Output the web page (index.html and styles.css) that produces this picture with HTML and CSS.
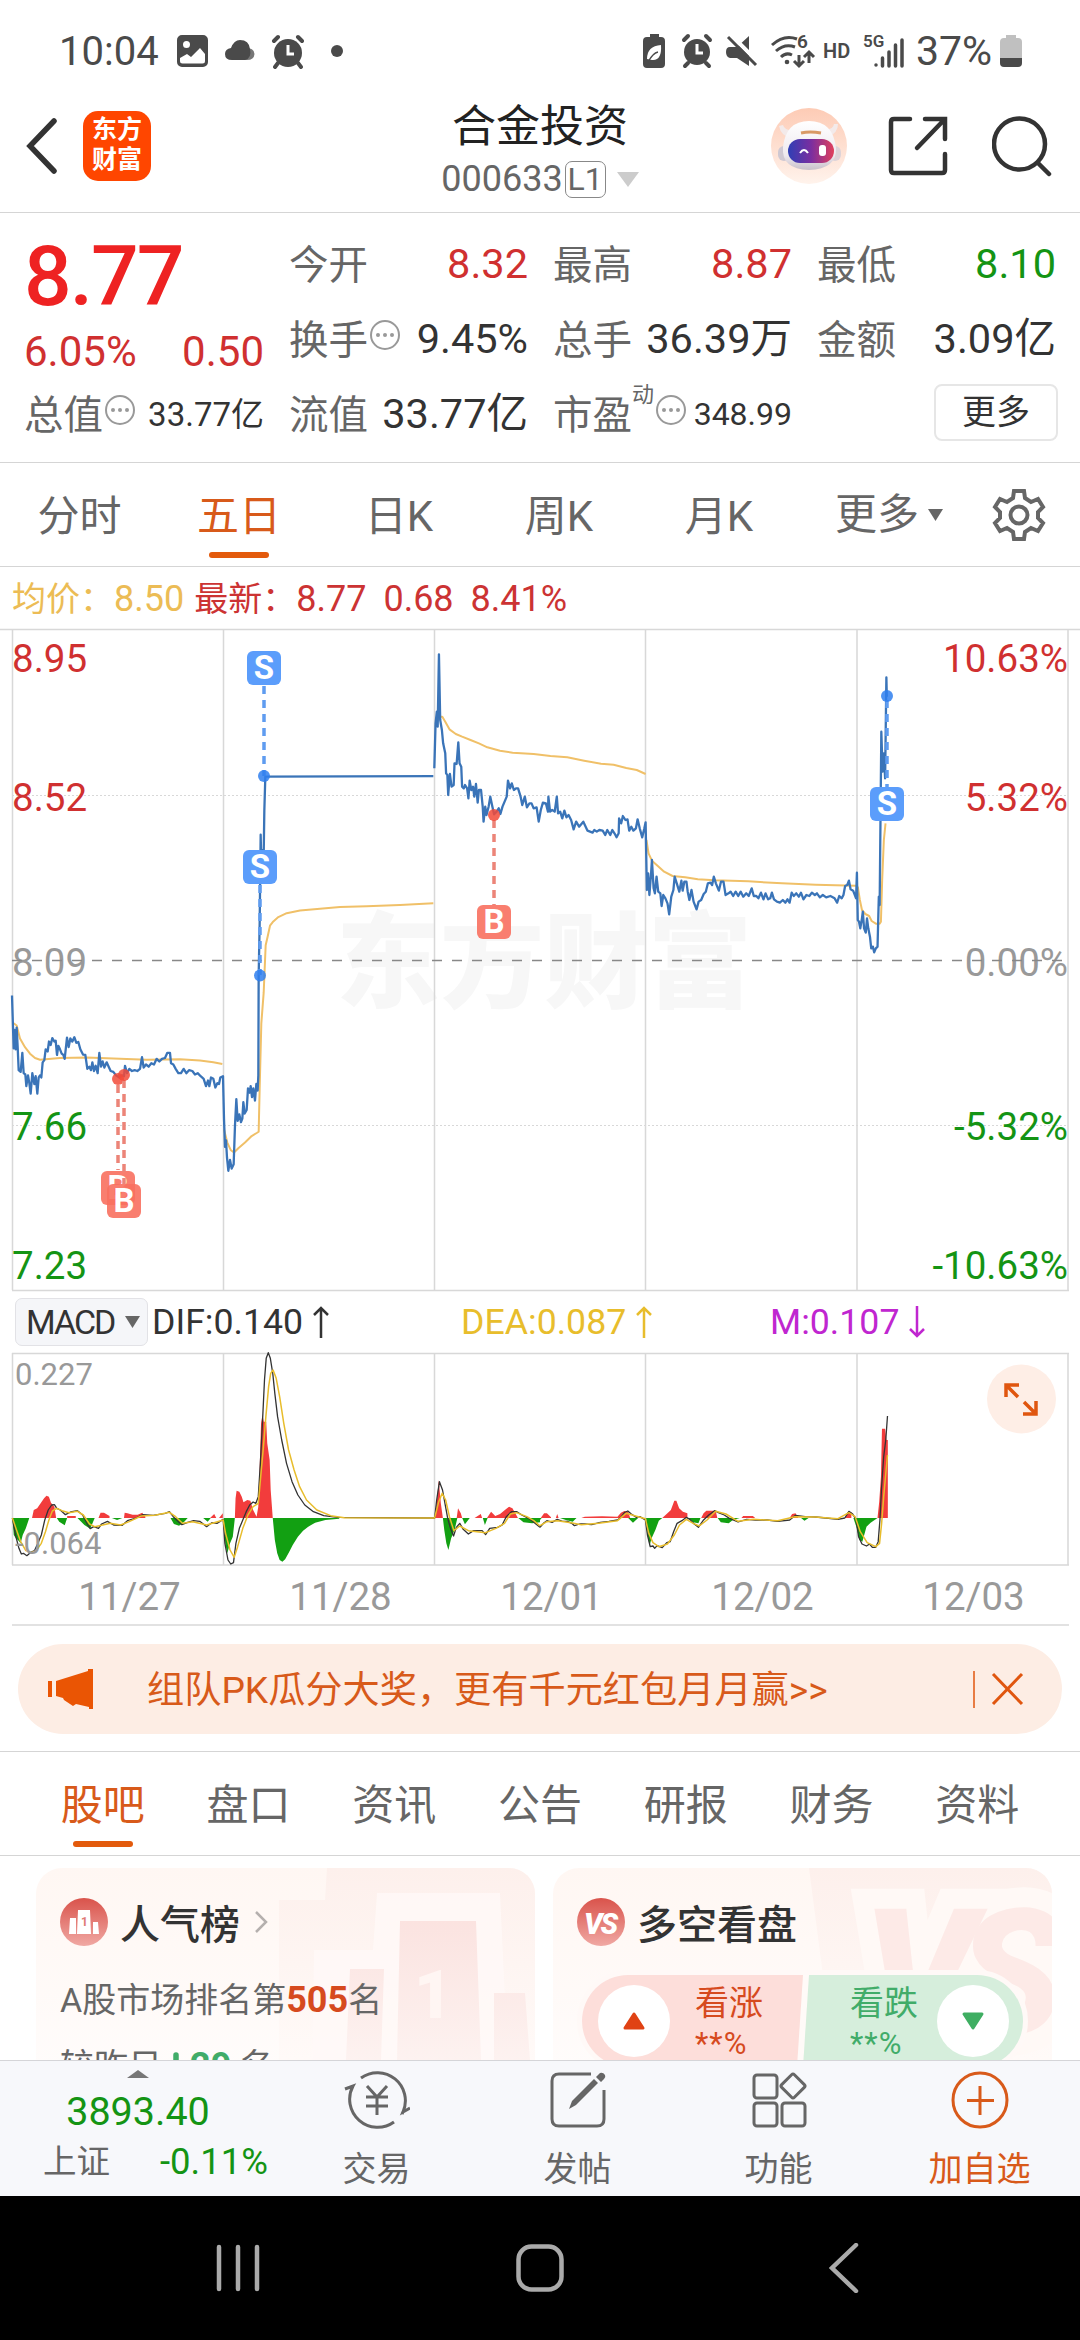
FILE: index.html
```html
<!DOCTYPE html>
<html lang="zh-CN">
<head>
  <meta charset="UTF-8">
  <meta name="viewport" content="width=device-width, initial-scale=1.0">
  <title>合金投资 000633</title>
  <link rel="stylesheet" href="styles.css">
</head>
<body>
  <div class="phone">

    <div class="statusbar">
      <span class="clock">10:04</span>
      <svg class="st-left" width="170" height="36" viewBox="0 0 170 36">
        <path fill="#4a4a4a" fill-rule="evenodd" d="M5 2h21a5 5 0 0 1 5 5v22a5 5 0 0 1-5 5H5a5 5 0 0 1-5-5V7a5 5 0 0 1 5-5zM9.500 8a3.500 3.500 0 1 0 0 7a3.500 3.500 0 0 0 0-7zM3 25v3q0 2.500 2.500 2.500h20q2.500 0 2.500-2.500v-7l-5-6l-9 9l-4-3z"/>
        <path fill="#777" d="M66 14q12 1 11.500 7q-.5 6-7.500 6h-8z"/>
        <path fill="#4a4a4a" d="M55 27q-7 0-7-6q0-5 6-6q3-8 9-8q9 0 10 9q2 9-5 11z"/>
        <circle cx="111" cy="20" r="14" fill="#4a4a4a"/>
        <path d="M111 12v9h6" fill="none" stroke="#fff" stroke-width="3"/>
        <path d="M97 8l4-4M125 8l-4-4M101 30l-3 4M121 30l3 4" stroke="#4a4a4a" stroke-width="4" stroke-linecap="round"/>
        <circle cx="160" cy="18" r="6" fill="#4a4a4a"/>
      </svg>
      <div class="st-right">
        <svg width="225" height="40" viewBox="0 0 225 40">
          <g fill="#4a4a4a">
            <path d="M9 3h9v3h2q4 0 4 4v23q0 4-4 4H6q-4 0-4-4V10q0-4 4-4h3z"/>
            <path d="M6 28q0-13 14-14q1 16-9 15zM4 30l5-2" fill="#fff"/>
            <circle cx="56" cy="21" r="13"/>
            <path d="M89 16h7l12-11v30L96 27h-7q-4-1-4-6t4-5z"/>
          </g>
          <path d="M7 31q5-9 10-10" fill="none" stroke="#4a4a4a" stroke-width="1.500"/>
          <path d="M56 13v9h6" fill="none" stroke="#fff" stroke-width="3"/>
          <path d="M43 9l4-4M69 9l-4-4M47 32l-3 3M65 32l3 3" stroke="#4a4a4a" stroke-width="4" stroke-linecap="round"/>
          <path d="M90 4l27 27" stroke="#fff" stroke-width="4"/>
          <path d="M87 6l28 28" stroke="#4a4a4a" stroke-width="3"/>
          <g fill="none" stroke="#4a4a4a" stroke-width="3">
            <path d="M131 14q12-11 25-6M135 20q9-8 19-4M140 26q5-5 11-2"/>
            <path d="M158 24v11m-5-5l5 5l5-5M168 32V21m-5 5l5-5l5 5"/>
          </g>
          <circle cx="146" cy="31" r="2.300" fill="#4a4a4a"/>
          <text x="156" y="17" class="st-six">6</text>
          <text x="182" y="27" class="st-hd">HD</text>
        </svg>
        <svg width="38" height="40" viewBox="0 0 38 40">
          <text x="-3" y="16" class="st-5g">5G</text>
          <path d="M10 34v0M16.500 35v-8M23 35V21M29.500 35V14M36 35V9" stroke="#4a4a4a" stroke-width="3.500" stroke-linecap="round"/>
        </svg>
        <span class="battery-num">37%</span>
        <svg width="22" height="36" viewBox="0 0 22 36">
          <path d="M6 2h10v3h2q4 0 4 4v17H0V9q0-4 4-4h2z" fill="#c0c0c0"/>
          <path d="M0 25h22v5q0 4-4 4H4q-4 0-4-4z" fill="#4a4a4a"/>
        </svg>
      </div>
    </div>

    <div class="header">
      <div class="header-left">
        <svg width="32" height="58" viewBox="0 0 32 58"><path d="M28 4L4 29l24 25" fill="none" stroke="#333" stroke-width="5.500" stroke-linecap="round"/></svg>
        <div class="logo">东方<br>财富</div>
      </div>
      <div class="title">
        <h1>合金投资</h1>
        <div class="code">000633<span class="level">L1</span><svg width="22" height="15" viewBox="0 0 22 15"><path d="M0 0h22L11 15z" fill="#ccc"/></svg></div>
      </div>
      <div class="header-right">
        <svg width="76" height="76" viewBox="0 0 76 76">
          <defs>
            <linearGradient id="peach" x1="0" y1="0" x2="0" y2="1"><stop offset="0" stop-color="#fdcbb5"/><stop offset="1" stop-color="#fff3ec"/></linearGradient>
            <linearGradient id="visor"><stop offset="0" stop-color="#2f3fb5"/><stop offset=".5" stop-color="#7a2ea0"/><stop offset="1" stop-color="#e0405c"/></linearGradient>
            <linearGradient id="helmet" x1="0" y1="0" x2="0" y2="1"><stop offset="0" stop-color="#fff"/><stop offset=".7" stop-color="#eee9ee"/><stop offset="1" stop-color="#c9c0ca"/></linearGradient>
          </defs>
          <circle cx="38" cy="38" r="38" fill="url(#peach)"/>
          <path d="M8 18q2 10 12 12l6-8q-12 2-14-5zM67 16q0 9-10 13l-6-8q11 2 12-5z" fill="#f3eaea"/>
          <rect x="7" y="38" width="12" height="15" rx="6" fill="#cfc8d2"/>
          <rect x="58" y="38" width="12" height="15" rx="6" fill="#ddd3d8"/>
          <path d="M38 13q24 0 27 27q1 21-27 22q-28-1-26-23q3-26 26-26z" fill="url(#helmet)"/>
          <rect x="17" y="31" width="46" height="24" rx="12" fill="url(#visor)"/>
          <path d="M30 25q9-2 20 0" fill="none" stroke="#d99a66" stroke-width="3"/>
          <path d="M29 45q4-6 8 0" fill="none" stroke="#fff" stroke-width="2"/>
          <rect x="48" y="37" width="7" height="11" rx="3" fill="#fff"/>
        </svg>
        <svg width="60" height="60" viewBox="0 0 60 60"><path d="M22 3H6Q3 3 3 6v48q0 3 3 3h48q3 0 3-3V38M37 3h20v20M56 4L29 32" fill="none" stroke="#333" stroke-width="4.500" stroke-linecap="round"/></svg>
        <svg width="60" height="62" viewBox="0 0 60 62"><circle cx="27.500" cy="29" r="25.500" fill="none" stroke="#333" stroke-width="4.500"/><path d="M46 48l11 11" stroke="#333" stroke-width="4.500" stroke-linecap="round"/></svg>
      </div>
    </div>

    <div class="quote">
      <div class="quote-main">
        <div class="price">8.77</div>
        <div class="change"><span>6.05%</span><span>0.50</span></div>
        <div class="cell small"><label>总值</label><i class="more-dot"></i><b>33.77亿</b></div>
      </div>
      <div class="quote-grid">
        <div class="cell"><label>今开</label><b class="up">8.32</b></div>
        <div class="cell"><label>最高</label><b class="up">8.87</b></div>
        <div class="cell"><label>最低</label><b class="down">8.10</b></div>
        <div class="cell"><label>换手</label><i class="more-dot"></i><b>9.45%</b></div>
        <div class="cell"><label>总手</label><b>36.39万</b></div>
        <div class="cell"><label>金额</label><b>3.09亿</b></div>
        <div class="cell"><label>流值</label><b>33.77亿</b></div>
        <div class="cell small pe"><label>市盈</label><sup>动</sup><i class="more-dot"></i><b>348.99</b></div>
        <div class="cell"><button class="btn-more">更多</button></div>
      </div>
    </div>

    <div class="period-tabs">
      <span>分时</span>
      <span class="active">五日</span>
      <span>日K</span>
      <span>周K</span>
      <span>月K</span>
      <span class="wide">更多<svg width="15" height="12" viewBox="0 0 15 12"><path d="M0 0h15L7.500 12z" fill="#666"/></svg></span>
      <svg class="gear" width="54" height="54" viewBox="0 0 54 54"><g fill="none" stroke="#666" stroke-width="4"><path stroke-linejoin="miter" d="M22 3h10l1 7l6 4l7-3l5 8l-5 5v6l5 5l-5 8l-7-3l-6 4l-1 7H22l-1-7l-6-4l-7 3l-5-8l5-5v-6l-5-5l5-8l7 3l6-4z"/><circle cx="27" cy="27" r="8.500"/></g></svg>
    </div>

    <div class="avg-row">
      <span class="avg">均价：<em>8.50</em></span>
      <span class="last">最新：<em>8.77</em><em>0.68</em><em>8.41%</em></span>
    </div>

    <svg class="price-chart" width="1080" height="663" viewBox="0 629 1080 663">
      <g class="watermark"><text x="336" y="1000" textLength="416">东方财富</text></g>
      <g class="grid">
        <path d="M0 629.500H1080M12 1290.500H1069"/>
        <path d="M12.500 629V1290M223.500 629V1290M434.500 629V1290M645.500 629V1290M857 629V1290M1068 629V1290"/>
        <path class="dotted" d="M12 795.500H1068M12 1125.500H1068"/>
      </g>
      <g class="axis">
        <text class="up" x="12" y="672">8.95</text>
        <text class="up" x="12" y="811">8.52</text>
        <text class="flat" x="12" y="976">8.09</text>
        <text class="down" x="12" y="1140">7.66</text>
        <text class="down" x="12" y="1279">7.23</text>
        <text class="up end" x="1068" y="672">10.63%</text>
        <text class="up end" x="1068" y="811">5.32%</text>
        <text class="flat end" x="1068" y="976">0.00%</text>
        <text class="down end" x="1068" y="1140">-5.32%</text>
        <text class="down end" x="1068" y="1279">-10.63%</text>
      </g>
      <path class="zero" d="M12 960.500H1068"/>

      <!-- 11/27, 11/28 -->
      <g transform="translate(0 620) scale(.33333 .43366)">
        <g class="avg-line">
          <polyline points="41,930 50,935 60,965 75,985 90,1000 105,1010 120,1014 180,1010 260,1009 340,1011 440,1014 540,1013 600,1016 640,1020 667,1024"/>
          <polyline points="672,1175 682,1205 692,1222 702,1228 715,1218 735,1205 755,1190 770,1183 776,1180 779,1080 784,930 791,860 797,750 803,730 810,705 820,695 835,685 860,676 900,670 960,666 1020,662 1100,660 1200,657 1300,653"/>
        </g>
        <polyline class="price-line" points="36,866 38,915 41,988 44,945 47,990 50,940 53,985 56,1038 62,1042 67,998 71,1045 76,1048 79,1075 84,1050 88,1068 92,1092 97,1045 103,1070 107,1052 112,1092 116,1055 120,1050 124,1055 128,1020 133,1015 137,990 143,995 147,972 152,980 157,964 163,972 167,970 171,1003 175,982 180,990 185,1000 190,1003 194,1012 201,963 206,985 211,965 217,972 223,962 229,975 235,973 241,990 249,1002 256,1003 262,1035 268,1030 273,1038 277,1020 282,1040 287,1028 293,1045 298,998 303,1030 308,1018 313,1032 320,1020 326,1030 332,1040 340,1042 348,1050 358,1055 366,1050 372,1052 375,1028 381,1045 388,1035 396,1040 404,1038 412,1040 420,1035 426,1008 431,1032 438,1025 446,1030 454,1022 462,1025 470,1012 478,1018 486,1012 495,1010 502,998 510,998 513,1022 520,1025 527,1035 535,1045 543,1045 551,1035 559,1045 567,1038 577,1040 585,1048 593,1045 602,1052 611,1058 618,1075 624,1062 628,1075 633,1055 640,1058 646,1078 652,1068 657,1070 661,1055 669,1052 672,1150 675,1215 678,1200 681,1240 685,1270 690,1245 695,1265 701,1255 705,1165 709,1105 713,1155 718,1140 723,1158 727,1150 730,1112 734,1138 740,1130 744,1080 749,1090 752,1075 756,1100 760,1080 765,1108 769,1070 773,1085 775,1050 776,820 779,700 782,495 785,600 788,530 791,545 793,440 796,361 1300,360"/>
      </g>

      <!-- 12/01 - 12/03 -->
      <g transform="translate(420 620) scale(.42092 .33333)">
        <g class="avg-line">
          <polyline points="37,320 45,290 53,290 60,305 70,328 85,342 100,350 120,360 140,370 160,382 190,392 220,398 270,402 310,408 350,412 390,422 430,431 460,434 490,444 515,450 536,462"/>
          <polyline points="538,660 543,700 551,722 565,738 580,755 600,768 630,772 660,778 700,781 780,784 860,790 940,794 1036,797"/>
          <polyline points="1040,800 1045,840 1050,870 1058,882 1067,888 1073,903 1083,911 1092,911 1095,905 1098,780 1102,660 1106,610"/>
        </g>
        <polyline class="price-line" points="34,445 37,310 40,275 42,320 45,103 48,300 52,330 55,370 60,400 62,460 65,465 67,525 71,462 75,500 80,495 82,430 87,432 91,367 94,430 98,440 100,500 104,505 107,495 112,505 115,535 118,482 122,510 126,500 129,530 133,492 137,548 140,510 145,510 149,560 151,605 155,560 158,585 163,560 167,530 172,560 176,583 182,575 187,565 191,582 196,560 201,545 206,530 209,482 214,505 218,490 223,510 228,505 233,505 239,530 243,555 249,530 254,562 260,550 265,550 270,565 277,562 282,605 287,570 292,548 299,550 304,575 305,530 309,575 314,570 320,575 325,530 328,580 333,575 338,595 343,572 348,592 353,585 359,600 365,628 371,605 378,620 388,605 398,632 410,638 414,630 420,635 426,630 434,632 440,645 445,630 452,645 457,630 462,640 467,652 472,640 473,595 478,610 482,588 488,600 493,598 497,632 502,620 507,632 513,625 517,598 522,625 528,652 533,625 536,607 539,810 542,760 545,825 549,760 551,720 555,805 558,820 562,770 566,815 571,820 574,858 578,825 583,835 588,850 592,883 597,830 602,810 605,770 610,790 616,815 621,782 624,812 628,785 633,785 636,815 640,840 645,810 650,845 657,868 662,845 668,840 674,822 679,815 684,790 690,788 694,795 698,770 703,790 710,812 715,785 721,785 726,825 733,820 738,815 744,828 750,815 756,828 762,815 768,830 775,820 781,828 788,805 793,828 799,828 804,835 810,818 816,838 821,820 827,838 832,835 836,818 841,838 848,845 855,848 862,840 868,848 873,838 878,848 883,818 888,828 894,820 900,830 905,818 911,838 918,825 925,828 931,818 938,825 943,820 950,832 957,825 965,832 975,828 985,835 991,848 996,828 1002,835 1006,825 1010,798 1015,795 1019,782 1023,808 1029,812 1036,835 1038,758 1040,900 1043,905 1046,925 1050,895 1052,875 1055,925 1059,938 1062,895 1065,925 1069,950 1072,985 1076,980 1079,997 1083,985 1087,980 1090,830 1092,855 1094,600 1096,335 1099,455 1102,400 1105,475 1108,172 1109,230"/>
      </g>

      <!-- trade marks -->
      <g class="mark sell">
        <path d="M264 686V776"/><circle cx="264" cy="776" r="6"/>
        <rect x="247" y="651" width="34" height="34" rx="6"/><text x="264" y="679">S</text>
      </g>
      <g class="mark sell">
        <path d="M260 885V975"/><circle cx="260" cy="975.500" r="6"/>
        <rect x="243" y="850" width="34" height="34" rx="6"/><text x="260" y="878">S</text>
      </g>
      <g class="mark buy">
        <path d="M118 1085V1170"/><circle cx="118" cy="1079" r="6"/>
        <rect x="101" y="1171" width="34" height="34" rx="6"/><text x="118" y="1199">B</text>
      </g>
      <g class="mark buy">
        <path d="M124 1080V1184"/><circle cx="124" cy="1075" r="6"/>
        <rect x="107" y="1184" width="34" height="34" rx="6"/><text x="124" y="1212">B</text>
      </g>
      <g class="mark buy">
        <path d="M494 820V905"/><circle cx="494" cy="815" r="6"/>
        <rect x="477" y="905" width="34" height="34" rx="6"/><text x="494" y="933">B</text>
      </g>
      <g class="mark sell">
        <path d="M887 700V788"/><circle cx="887" cy="696" r="6"/>
        <rect x="870" y="787" width="34" height="34" rx="6"/><text x="887" y="815">S</text>
      </g>
    </svg>

    <div class="macd-row">
      <span class="macd-btn">MACD<svg width="15" height="12" viewBox="0 0 15 12"><path d="M0 0h15L7.500 12z" fill="#666"/></svg></span>
      <span class="dif">DIF:0.140<svg width="16" height="32" viewBox="0 0 16 32"><path d="M8 32V2M1 9l7-7l7 7"/></svg></span>
      <span class="dea">DEA:0.087<svg width="16" height="32" viewBox="0 0 16 32"><path d="M8 32V2M1 9l7-7l7 7"/></svg></span>
      <span class="m">M:0.107<svg width="16" height="32" viewBox="0 0 16 32"><path d="M8 0v30M1 23l7 7l7-7"/></svg></span>
    </div>

    <svg class="macd-chart" width="1080" height="214" viewBox="0 1352 1080 214">
      <g class="grid">
        <path d="M12 1353.500H1069M12 1565H1069"/>
        <path d="M12.500 1353V1565M223.500 1353V1565M434.500 1353V1565M645.500 1353V1565M857 1353V1565M1068 1353V1565"/>
      </g>
      <g transform="translate(0 1290) scale(.34439 .33333)">
        <path class="bar-up" d="M93 684L98 660L108 655L118 640L128 625L135 617L142 620L148 638L158 650L163 684zM195 684V678H220V684zM286 684L292 668H302L318 678V684zM360 684L362 668L370 670L385 674H400L413 668L422 680V684zM610 684L622 672L628 684zM636 684L647 670V684zM682 684L684 625L687 602L695 605L702 620L707 637L718 630L727 632L735 660L745 680L750 650L753 560L756 470L758 400L762 375L766 395H773L776 460L783 510L786 600L792 684zM1262 684L1268 640L1274 570L1280 640L1286 684zM1326 684L1330 655L1338 670L1342 684zM1378 684L1396 672L1400 684zM1414 684L1426 665L1438 678L1452 672L1466 660L1478 650L1488 655L1504 684z"/>
        <path class="bar-down" d="M36 684L40 735L46 745L52 750L60 760L66 735L75 715L85 684zM165 684L172 695L188 706L195 684zM225 684L245 705L262 716L275 684zM325 684L340 690L355 684zM495 684L505 702L520 707L535 695L545 684zM590 684L603 695L612 684zM650 684L654 760L660 790L668 760L676 740L682 684zM792 684L798 750L805 790L812 810L820 815L828 808L840 785L850 765L865 740L880 722L895 710L915 698L945 690L985 686V684zM1286 684L1290 720L1296 760L1302 780L1310 745L1320 720L1328 684zM1342 684L1350 703L1364 684zM1402 684L1408 705L1416 684zM1505 684L1520 697L1545 700L1568 697V684z"/>
        <polyline class="dif-line" points="36,684 45,735 55,775 62,792 68,790 78,797 88,788 100,782 110,760 120,735 130,690 140,660 150,645 158,644 165,655 175,660 190,674 205,666 225,662 240,675 252,700 262,716 272,710 286,715 295,702 312,694 330,705 355,706 370,692 395,684 415,674 445,676 480,670 492,665 503,680 515,692 528,704 545,697 562,692 580,694 600,710 615,698 630,700 648,688 653,760 662,810 670,822 678,818 685,760 695,715 705,690 715,665 725,645 735,636 743,640 750,620 756,520 762,400 768,270 773,205 779,188 785,205 792,250 798,310 806,380 818,450 832,520 848,575 865,615 885,645 910,665 940,677 980,682 1262,684 1268,630 1276,575 1285,600 1292,640 1300,685 1308,715 1317,738 1325,712 1335,700 1345,718 1360,732 1375,722 1400,722 1410,734 1422,715 1445,712 1458,705 1470,680 1485,665 1500,665 1515,675 1535,685 1550,697 1568,712"/>
        <polyline class="dea-line" points="36,684 48,720 60,755 75,782 90,788 105,782 120,760 132,725 142,690 152,663 165,655 180,662 200,668 225,664 242,675 260,702 275,710 295,706 320,700 350,705 375,695 410,678 450,676 492,667 510,680 530,700 560,695 600,705 648,690 655,730 668,780 680,802 690,770 705,715 720,675 735,650 750,640 757,560 765,470 772,380 780,290 786,250 793,240 802,265 812,320 824,400 838,480 854,540 870,590 890,630 920,660 960,677 1000,683 1262,684 1274,635 1284,610 1294,630 1305,680 1318,722 1335,708 1360,722 1410,728 1440,715 1465,700 1482,672 1500,668 1530,680 1550,692 1568,708"/>
      </g>
      <g transform="translate(540 1290) scale(.34439 .33333)">
        <path class="bar-up" d="M2 684L12 670H20L32 682V684zM46 684L50 672L54 684zM120 684L130 680L180 679L225 680L235 668L245 663L256 666L262 684zM355 684L370 670L380 660L390 632L396 632L404 655L415 665L428 670V684zM468 684L475 670L483 662H510L515 684zM585 684L590 678H618L625 684zM725 684L732 672L742 670L750 684zM885 684L892 668L904 666V684zM980 684L985 635L990 560L993 416H1002L1006 450H1010V684z"/>
        <path class="bar-down" d="M0 684V690L5 684zM58 684L75 690L95 695L106 684zM256 684L270 698L285 684zM308 684L312 730L318 768L324 745L335 720L345 692L355 684zM430 684L445 697L460 700L466 684zM516 684L525 697L548 700L560 690L580 684zM758 684L768 692L780 684zM910 684L920 715L928 750L936 755L948 710L960 698L980 684z"/>
        <polyline class="dif-line" points="0,712 10,700 20,692 35,697 50,688 65,694 80,694 92,700 100,707 115,702 130,702 150,704 175,697 200,694 225,690 235,682 245,668 255,663 265,672 280,682 290,680 306,690 312,735 320,770 328,768 333,775 340,767 355,773 368,758 378,755 388,725 398,700 412,692 425,682 435,688 448,702 460,712 475,690 490,675 507,662 518,668 535,675 550,685 575,696 600,688 625,690 660,690 690,694 725,690 742,676 770,680 800,681 830,684 865,688 885,684 897,664 908,672 918,690 925,740 935,762 948,768 957,762 965,772 975,772 982,755 987,690 992,590 998,500 1004,450 1009,378"/>
        <polyline class="dea-line" points="0,707 20,695 50,692 90,698 120,704 170,700 225,692 250,670 270,676 306,686 316,730 328,758 345,770 370,762 390,735 405,705 425,688 445,700 462,708 485,690 510,664 540,672 575,694 620,688 690,692 740,680 800,681 865,686 897,668 915,680 930,725 950,758 975,770 986,760 992,700 998,620 1005,540 1009,495"/>
      </g>
      <g class="axis">
        <text class="flat" x="15" y="1385">0.227</text>
        <text class="flat" x="15" y="1554">-0.064</text>
      </g>
      <circle cx="1021.500" cy="1399" r="34.500" fill="#feeee6"/>
      <path d="M1006 1397V1385H1019M1007 1386L1018 1397M1023 1414H1036V1401M1035 1413L1024 1402" fill="none" stroke="#e0560f" stroke-width="3.500"/>
    </svg>

    <div class="dates"><span>11/27</span><span>11/28</span><span>12/01</span><span>12/02</span><span>12/03</span></div>

    <div class="banner">
      <svg width="46" height="42" viewBox="0 0 46 42"><path d="M0 13h4v16H0zM8 13L40 3V1h5v40h-4v-2L28 36l-3 2l-9-6l-1-2l-7-2z" fill="#ea5504"/></svg>
      <p>组队PK瓜分大奖，更有千元红包月月赢&gt;&gt;</p>
      <svg class="close" width="52" height="38" viewBox="0 0 52 38"><path d="M1 1v37" stroke="#e0560f" stroke-width="1.500"/><path d="M20 4l29 30M49 4L20 34" stroke="#e0560f" stroke-width="3"/></svg>
    </div>

    <div class="info-tabs">
      <span class="active">股吧</span><span>盘口</span><span>资讯</span><span>公告</span><span>研报</span><span>财务</span><span>资料</span>
    </div>

    <div class="cards">
      <div class="card rank">
        <svg class="card-bg" width="499" height="192" viewBox="0 0 499 192">
          <defs><linearGradient id="fade" x1="0" y1="0" x2="0" y2="1"><stop offset="0" stop-color="#fdf0ec"/><stop offset="1" stop-color="#fffaf8"/></linearGradient>
          <linearGradient id="fade2" x1="0" y1="0" x2="0" y2="1"><stop offset="0" stop-color="#fbe3e0"/><stop offset="1" stop-color="#fdf2f0"/></linearGradient></defs>
          <path d="M243 192V32h46l2-32h208v192z" fill="url(#fade)"/>
          <path d="M276 192l2-110h59l4-57h123l8 167z" fill="#fff9f7" opacity=".8"/>
          <path d="M310 192l4-91h34l-3 91zM361 192l3-139h76l5 139zM458 192v-67h31l5 67z" fill="url(#fade2)"/>
          <text x="378" y="150" class="bg-one">1</text>
        </svg>
        <div class="card-title">
          <svg width="48" height="48" viewBox="0 0 48 48">
            <defs><linearGradient id="badge" x1="0" y1="0" x2="0" y2="1"><stop offset="0" stop-color="#d9534b"/><stop offset="1" stop-color="#f0a8a3"/></linearGradient></defs>
            <circle cx="24" cy="24" r="24" fill="url(#badge)"/>
            <path d="M9 36l1-16h6v16zM17 36l1-24h12l1 24zM33 36V24h5l1 12z" fill="#fff"/>
            <text x="21" y="28" class="badge-one">1</text>
          </svg>
          <h2>人气榜</h2>
          <svg class="chev" width="14" height="24" viewBox="0 0 14 24"><path d="M2 2l10 10L2 22" fill="none" stroke="#b5b0ae" stroke-width="2.500"/></svg>
        </div>
        <p class="rank-line">A股市场排名第<b>505</b>名</p>
        <p class="rank-line second">较昨日<svg width="26" height="26" viewBox="0 0 26 26"><path d="M12 3v20M4 15l8 8l8-8" fill="none" stroke="#41ac69" stroke-width="5.500" stroke-linecap="round"/></svg><b>29</b> 名</p>
      </div>

      <div class="card versus">
        <svg class="card-bg" width="499" height="192" viewBox="0 0 499 192">
          <path d="M256 0h243v192H281z" fill="url(#fade)"/>
          <text x="310" y="166" class="bg-vs outline">VS</text>
          <text x="310" y="166" class="bg-vs">VS</text>
        </svg>
        <div class="card-title">
          <svg width="48" height="48" viewBox="0 0 48 48"><circle cx="24" cy="24" r="24" fill="url(#badge)"/><text x="23" y="36" class="badge-vs">VS</text></svg>
          <h2>多空看盘</h2>
        </div>
        <div class="vote">
          <div class="bull">
            <i class="round"><svg width="24" height="20" viewBox="0 0 24 20"><path d="M12 3l9 14H3z" fill="#e04214" stroke="#e04214" stroke-width="3" stroke-linejoin="round"/></svg></i>
            <span>看涨<br><small>**%</small></span>
          </div>
          <div class="bear">
            <span>看跌<br><small>**%</small></span>
            <i class="round"><svg width="24" height="20" viewBox="0 0 24 20"><path d="M12 17l9-14H3z" fill="#3fae62" stroke="#3fae62" stroke-width="3" stroke-linejoin="round"/></svg></i>
          </div>
        </div>
      </div>
    </div>

    <div class="toolbar">
      <div class="index">
        <svg width="22" height="8" viewBox="0 0 22 8"><path d="M0 8L11 0l11 8z" fill="#777"/></svg>
        <strong>3893.40</strong>
        <div><span>上证</span><em>-0.11%</em></div>
      </div>
      <div class="tool">
        <svg width="66" height="60" viewBox="0 0 66 60"><g fill="none" stroke="#666" stroke-width="3"><path d="M17 8A28 28 0 0 1 59 42l7-4M50 52A28 28 0 0 1 9 16l-8 3M59 42l-1 2M9 16l1 0"/><path d="M23 16l10 11l10-11M22 27h22M22 36h22M33 27v18"/></g></svg>
        交易
      </div>
      <div class="tool">
        <svg width="60" height="60" viewBox="0 0 60 60"><path d="M43 4H11Q4 4 4 11v38q0 7 7 7h38q7 0 7-7V20" fill="none" stroke="#666" stroke-width="3"/><path d="M21 39l3-8L46 9l4 4L28 35zM48 7l4-4q3-1 5 2q1 2-1 4l-3 3z" fill="#666"/></svg>
        发帖
      </div>
      <div class="tool">
        <svg width="60" height="60" viewBox="0 0 60 60"><g fill="none" stroke="#666" stroke-width="3"><rect x="5" y="5" width="23" height="23" rx="3"/><rect x="5" y="33" width="23" height="23" rx="3"/><rect x="33" y="33" width="23" height="23" rx="3"/><rect x="35" y="7" width="18" height="18" rx="2" transform="rotate(45 44 16)"/></g></svg>
        功能
      </div>
      <div class="tool add">
        <svg width="60" height="60" viewBox="0 0 60 60"><g fill="none" stroke="#d85a1a" stroke-width="3"><circle cx="30" cy="30" r="27"/><path d="M30 16v29M17 30.500h27"/></g></svg>
        加自选
      </div>
    </div>

    <div class="navbar">
      <svg width="44" height="48" viewBox="0 0 44 48"><path d="M3 3v42M22 3v42M41 3v42" stroke="#aaa" stroke-width="4.500" stroke-linecap="round"/></svg>
      <svg class="home" width="48" height="48" viewBox="0 0 48 48"><rect x="2.500" y="2.500" width="43" height="43" rx="13" fill="none" stroke="#aaa" stroke-width="4.500"/></svg>
      <svg class="back" width="30" height="50" viewBox="0 0 30 50"><path d="M27 2L3 25l24 23" fill="none" stroke="#aaa" stroke-width="4.500" stroke-linecap="round"/></svg>
    </div>
  </div>
</body>
</html>
```

FILE: styles.css
```css
* {
  box-sizing: border-box;
}

body {
  margin: 0;
  background: #fff;
  color: #333;
  font-family: Roboto, "Noto Sans CJK SC", sans-serif;
}

h1, h2, p {
  margin: 0;
  font-weight: 400;
}

em, i {
  font-style: normal;
}

svg {
  display: block;
  flex: none;
}

.phone {
  width: 1080px;
  height: 2340px;
  overflow: hidden;
  display: flex;
  flex-direction: column;
}

.phone > * {
  flex: none;
}

.up { color: #d03030; fill: #d03030; }
.down { color: #149414; fill: #149414; }
.flat { fill: #999; }

/* status bar */
.statusbar {
  height: 92px;
  padding: 10px 58px 0 59px;
  display: flex;
  align-items: center;
  color: #4a4a4a;
}

.clock {
  width: 118px;
  font-size: 40px;
}

.st-right {
  margin-left: auto;
  display: flex;
  align-items: center;
}

.battery-num {
  font-size: 41px;
  margin: 0 8px 0 12px;
}

.st-six, .st-hd, .st-5g {
  fill: #4a4a4a;
  font-weight: 600;
}

.st-six { font-size: 19px; }
.st-hd { font-size: 20px; }
.st-5g { font-size: 17px; }

.price-chart, .st-right svg {
  overflow: visible;
}

/* header */
.header {
  height: 121px;
  border-bottom: 1px solid #d5d5d5;
  display: grid;
  grid-template-columns: 1fr auto 1fr;
  align-items: center;
}

.header-left {
  display: flex;
  align-items: center;
  gap: 25px;
  padding-left: 26px;
  padding-bottom: 13px;
}

.logo {
  width: 68px;
  height: 70px;
  border-radius: 15px;
  background: #ff4600;
  color: #fff;
  font-size: 25px;
  line-height: 30px;
  font-weight: 700;
  text-align: center;
  padding-top: 4px;
}

.title {
  text-align: center;
  padding-bottom: 1px;
}

.title h1 {
  font-size: 44px;
  line-height: 54px;
  color: #222;
}

.code {
  display: flex;
  align-items: center;
  justify-content: center;
  height: 50px;
  padding-top: 1px;
  font-size: 36px;
  color: #666;
}

.level {
  height: 37px;
  line-height: 34px;
  width: 41px;
  font-size: 32px;
  margin: 0 11px 0 2px;
  border: 1.500px solid #888;
  border-radius: 7px;
}

.header-right {
  display: flex;
  align-items: center;
  justify-content: flex-end;
  gap: 41px;
  padding-right: 28px;
  padding-bottom: 12px;
}

.header-right svg:nth-child(3) {
  margin-left: 3px;
}

/* quote panel */
.quote {
  height: 250px;
  border-bottom: 1px solid #d5d5d5;
  padding: 14px 24px 0 24px;
  display: flex;
  gap: 25px;
}

.quote-main {
  width: 240px;
}

.price {
  height: 93px;
  line-height: 99px;
  font-size: 84px;
  font-weight: 500;
  letter-spacing: -2px;
  color: #ee2222;
}

.change {
  height: 57px;
  line-height: 63px;
  display: flex;
  justify-content: space-between;
  font-size: 42px;
  color: #d03030;
}

.quote-grid {
  flex: 1;
  display: grid;
  grid-template-columns: repeat(3, 239px);
  grid-auto-rows: 75px;
  column-gap: 25px;
}

.cell {
  height: 75px;
  display: flex;
  align-items: center;
}

.cell label {
  font-size: 39.500px;
  color: #666;
  margin-top: -7px;
}

.cell b {
  margin-left: auto;
  font-weight: 400;
  font-size: 41.500px;
  line-height: 48px;
  white-space: nowrap;
}

.cell.small b {
  font-size: 33px;
}

.quote-grid .cell b {
  margin-top: -1px;
}

.cell.pe b {
  font-size: 32px;
}

.cell sup {
  font-size: 22px;
  line-height: 22px;
  color: #666;
  align-self: flex-start;
  margin-top: 7px;
}

.more-dot {
  width: 30px;
  height: 30px;
  flex: none;
  border: 2px solid #999;
  border-radius: 50%;
  display: flex;
  align-items: center;
  justify-content: center;
  margin: -9px 0 0 2px;
}

.more-dot::before {
  content: "";
  width: 4px;
  height: 4px;
  border-radius: 50%;
  background: #999;
  box-shadow: -7px 0 #999, 7px 0 #999;
}

.btn-more {
  width: 124px;
  height: 57px;
  margin: -5px -2px 0 auto;
  background: #fff;
  border: 2px solid #e6e6e6;
  border-radius: 8px;
  color: #333;
  font: 34px/48px Roboto, "Noto Sans CJK SC", sans-serif;
  padding: 0;
}

/* period tabs */
.period-tabs {
  height: 104px;
  border-bottom: 1px solid #d5d5d5;
  display: flex;
  align-items: center;
}

.period-tabs span {
  width: 160px;
  height: 103px;
  line-height: 108px;
  text-align: center;
  font-size: 42px;
  color: #666;
}

.period-tabs span:first-child {
  width: 159px;
}

.period-tabs .wide {
  width: 180px;
  display: flex;
  align-items: center;
  justify-content: center;
  gap: 9px;
}

.period-tabs .gear {
  margin-left: 13px;
}

.period-tabs .active, .info-tabs .active {
  color: #d85a1a;
}

.active::after {
  content: "";
  display: block;
  width: 60px;
  height: 6px;
  border-radius: 3px;
  background: #e35a0c;
  margin: -19px auto 0;
}

.avg-row {
  height: 62px;
  line-height: 64px;
  padding-left: 12px;
  font-size: 34px;
  display: flex;
  gap: 10px;
}

.avg-row em {
  font-size: 36px;
}

.avg { color: #ecbc55; }
.last { color: #cc3333; }
.last em + em { margin-left: 17px; }

/* charts */
.grid path {
  fill: none;
  stroke: #d8d8d8;
  stroke-width: 1.500;
}

.grid .dotted {
  stroke-width: 1;
  stroke-dasharray: 2 2;
}

.axis text {
  font-size: 38.500px;
}

.axis .end {
  text-anchor: end;
}

.macd-chart .axis text {
  font-size: 31px;
}

.zero {
  stroke: #888;
  stroke-width: 1.500;
  stroke-dasharray: 10 10;
}

.watermark text {
  font-size: 104px;
  font-weight: 900;
  fill: #f7f7f7;
}

polyline {
  fill: none;
  stroke-linejoin: round;
  vector-effect: non-scaling-stroke;
}

.price-line {
  stroke: #3a74b8;
  stroke-width: 2.300;
}

.avg-line polyline {
  stroke: #f0c068;
  stroke-width: 2;
}

.mark path {
  fill: none;
  stroke-width: 3.500;
  stroke-dasharray: 8 6;
}

.mark text {
  fill: #fff;
  font-size: 33px;
  font-weight: 700;
  text-anchor: middle;
}

.mark.sell circle { fill: #2f7fef; opacity: .85; }
.mark.sell path { stroke: #5f9cf0; }
.mark.sell rect { fill: #5b9dfb; }
.mark.buy circle { fill: #f24a38; opacity: .85; }
.mark.buy path { stroke: #ec8478; }
.mark.buy rect { fill: #f8705f; opacity: .9; }

.bar-up { fill: #f23c3c; }
.bar-down { fill: #12a012; }

.dif-line {
  stroke: #333;
  stroke-width: 1.300;
}

.dea-line {
  stroke: #e8bd2c;
  stroke-width: 1.500;
}

.macd-row {
  height: 60px;
  display: flex;
  align-items: center;
  padding: 0 0 1px 15px;
  font-size: 35.700px;
}

.macd-btn {
  width: 133px;
  height: 48px;
  margin-right: 4px;
  padding-left: 10px;
  display: flex;
  align-items: center;
  gap: 11px;
  font-size: 34px;
  letter-spacing: -2px;
  background: #f5f6f9;
  border: 1px solid #e2e2e6;
  border-radius: 7px;
}

.dif, .dea, .m {
  width: 309px;
  display: flex;
  align-items: center;
  gap: 10px;
}

.dea { color: #e8bd2c; }
.m { color: #c026d0; }

.macd-row path {
  stroke: currentColor;
  stroke-width: 2.500;
  fill: none;
}

.macd-btn path {
  stroke: none;
  fill: #666;
}

.dates {
  height: 60px;
  margin: 0 11px 0 12px;
  padding-left: 12px;
  border-bottom: 2px solid #e2e2e2;
  display: flex;
  line-height: 61px;
  font-size: 38.500px;
  color: #999;
}

.dates span {
  width: 211px;
  flex: none;
  text-align: center;
}

/* promo banner */
.banner {
  height: 90px;
  margin: 18px 18px 17px;
  padding: 0 37px 0 30px;
  border-radius: 45px;
  background: #fdede4;
  display: flex;
  align-items: center;
}

.banner p {
  margin-left: 53px;
  padding-bottom: 5px;
  font-size: 37.200px;
  color: #d85a1a;
  white-space: nowrap;
}

.banner .close {
  margin-left: auto;
}

.info-tabs {
  height: 105px;
  border-top: 1px solid #d5d5d5;
  border-bottom: 1px solid #d5d5d5;
  padding: 0 30px;
  display: flex;
}

.info-tabs span {
  flex: 1;
  text-align: center;
  font-size: 42px;
  line-height: 108px;
  color: #666;
}

/* cards */
.cards {
  height: 204px;
  overflow: hidden;
  padding: 12px 28px 0 36px;
  display: flex;
  gap: 18px;
}

.card {
  position: relative;
  width: 499px;
  height: 260px;
  overflow: hidden;
  border-radius: 26px;
  padding: 30px 24px 0;
  background: linear-gradient(#fff7f3, #fffcfb 200px);
}

.card-bg {
  position: absolute;
  top: 0;
  left: 0;
}

.card-title {
  position: relative;
  display: flex;
  align-items: center;
  height: 48px;
}

.card-title h2 {
  margin-left: 12px;
  font-size: 40px;
  line-height: 48px;
  font-weight: 500;
  padding-top: 8px;
}

.chev {
  margin-left: 14px;
}

.rank-line {
  position: relative;
  margin-top: 29px;
  height: 50px;
  line-height: 50px;
  font-size: 34px;
  color: #666;
}

.rank-line b {
  font-size: 36px;
  color: #d64a1e;
}

.rank-line.second {
  margin-top: 16px;
}

.rank-line svg {
  display: inline-block;
  margin-left: 2px;
}

.rank-line.second b {
  color: #41ac69;
}

.badge-one {
  font-size: 12px;
  font-weight: 700;
  fill: #e07a74;
}

.badge-vs {
  font-size: 29px;
  font-weight: 900;
  font-style: italic;
  fill: #fff;
  text-anchor: middle;
  letter-spacing: -2px;
}

.bg-one {
  font-size: 66px;
  font-weight: 900;
  fill: #fff6f3;
}

.bg-vs {
  font-size: 175px;
  font-weight: 900;
  font-style: italic;
  letter-spacing: -18px;
  fill: #fdeae7;
}

.bg-vs.outline {
  stroke: #fff9f6;
  stroke-width: 40px;
}

.vote {
  position: relative;
  display: flex;
  width: 451px;
  height: 102px;
  margin: 24px 0 0;
  border: 5px solid #fff9f7;
  border-radius: 51px;
  overflow: hidden;
  background: #fffaf8;
}

.bull, .bear {
  display: flex;
  align-items: center;
  font-size: 34px;
  line-height: 39px;
}

.bull span, .bear span {
  padding-top: 5px;
}

.bull {
  width: 221px;
  background: #fddeda;
  color: #d64a1e;
  clip-path: polygon(0 0, 100% 0, calc(100% - 6px) 100%, 0 100%);
  padding-left: 16px;
  gap: 25px;
}

.bear {
  flex: 1;
  background: #d6eedc;
  color: #41ac69;
  clip-path: polygon(6px 0, 100% 0, 100% 100%, 0 100%);
  padding-left: 47px;
  gap: 19px;
}

.vote small {
  font-size: 31px;
  letter-spacing: 1px;
}

.round {
  width: 72px;
  height: 72px;
  border-radius: 50%;
  background: #fff;
  display: flex;
  align-items: center;
  justify-content: center;
}

/* bottom toolbar */
.toolbar {
  height: 136px;
  background: #f7f8fb;
  border-top: 1px solid #d5d5d8;
  display: flex;
}

.index {
  width: 276px;
  padding-top: 9px;
  display: flex;
  flex-direction: column;
  align-items: center;
  color: #149414;
}

.index strong {
  font-weight: 400;
  font-size: 39.500px;
  line-height: 46px;
  margin-top: 11px;
}

.index div {
  width: 100%;
  padding: 0 8px 0 43px;
  display: flex;
  align-items: center;
  justify-content: space-between;
  line-height: 53px;
  font-size: 36.500px;
}

.index div span {
  font-size: 33.500px;
  color: #666;
}

.tool {
  width: 201px;
  padding-top: 9px;
  display: flex;
  flex-direction: column;
  align-items: center;
  font-size: 34px;
  line-height: 50px;
  color: #666;
}

.tool svg {
  margin-bottom: 14px;
}

.tool.add {
  color: #d85a1a;
}

/* android navigation */
.navbar {
  height: 144px;
  background: #000;
  display: flex;
  align-items: center;
  padding-left: 216px;
}

.navbar .home {
  margin-left: 256px;
}

.navbar .back {
  margin-left: 265px;
}
```
